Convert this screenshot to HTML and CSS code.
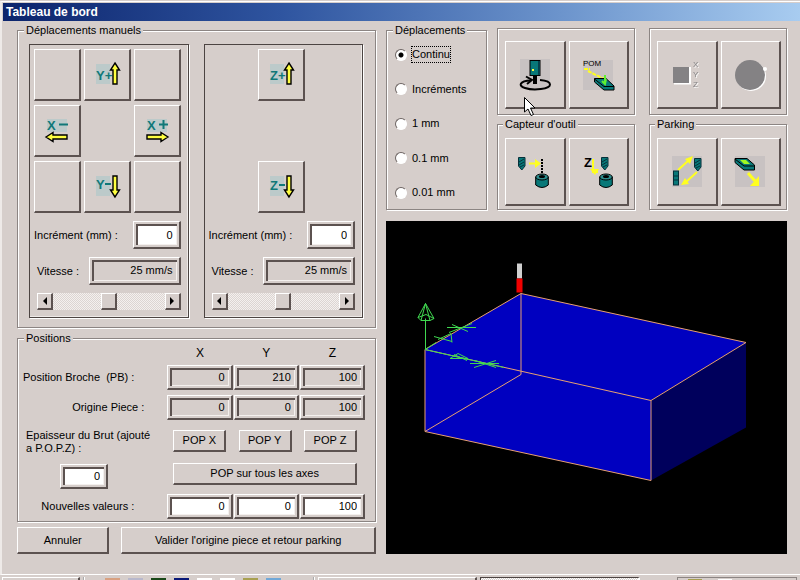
FILE: index.html
```html
<!DOCTYPE html>
<html lang="fr">
	<head>
		<meta charset="UTF-8" />
		<meta name="viewport" content="width=device-width, initial-scale=1.0" />
		<title>Tableau de bord</title>
		<link rel="stylesheet" href="styles.css">
	</head>
	<body>
		<!-- shared icon shapes -->
		<svg class="defs" width="0" height="0">
			<defs>
				<path id="arrow-up" d="M5 1 L9.5 8 H7 V22 H3 V8 H0.5 Z" fill="#ffff40" stroke="#000" stroke-width="1.4" />
				<g id="drill">
					<path d="M0.5 0.5 H7 V9 L3.8 13 L0.5 9 Z" fill="#087878" stroke="#06303a" />
					<path d="M1 5 L6 2 M1 8 L6 5 M2 10 L6 8" stroke="#06303a" />
				</g>
				<g id="cylinder">
					<path d="M0.7 4 V12 Q7 17 13.3 12 V4" fill="#087878" stroke="#000" />
					<ellipse cx="7" cy="4" rx="6.3" ry="3" fill="#2c8c8c" stroke="#000" />
					<ellipse cx="7" cy="3.5" rx="3" ry="1.5" fill="#000" />
				</g>
			</defs>
		</svg>

		<div class="window">
			<div class="titlebar">Tableau de bord</div>
			<div class="content">
				<div class="left">
					<fieldset class="group manual">
						<legend>Déplacements manuels</legend>
						<div class="panel">
							<div class="pad">
								<button aria-label="Haut gauche"></button>
								<button aria-label="Y plus">
									<svg class="icon" viewBox="0 0 30 30">
										<rect class="tint" x="4" y="4" width="14" height="20" />
										<text class="axis" x="4" y="20">Y+</text>
										<use href="#arrow-up" x="18" y="2" />
									</svg>
								</button>
								<button aria-label="Haut droite"></button>
								<button aria-label="X moins">
									<svg class="icon" viewBox="0 0 30 30">
										<rect class="tint" x="5" y="3" width="20" height="13" />
										<text class="axis" x="5" y="14">X</text>
										<path d="M17 8.5 H26" stroke="#107878" stroke-width="2" />
										<use href="#arrow-up" transform="translate(3 26) rotate(-90)" />
									</svg>
								</button>
								<button class="right-col" aria-label="X plus">
									<svg class="icon" viewBox="0 0 30 30">
										<rect class="tint" x="5" y="3" width="20" height="13" />
										<text class="axis" x="5" y="14">X</text>
										<path d="M17 8.5 H26 M21.5 4 V13" stroke="#107878" stroke-width="2" />
										<use href="#arrow-up" transform="translate(27 16) rotate(90)" />
									</svg>
								</button>
								<button aria-label="Bas gauche"></button>
								<button aria-label="Y moins">
									<svg class="icon" viewBox="0 0 30 30">
										<rect class="tint" x="4" y="4" width="14" height="20" />
										<text class="axis" x="4" y="17">Y</text>
										<path d="M13 12 H19" stroke="#107878" stroke-width="2" />
										<use href="#arrow-up" transform="translate(28 26) rotate(180)" />
									</svg>
								</button>
								<button aria-label="Bas droite"></button>
							</div>
							<div class="row">
								<label for="inc-xy">Incrément (mm) :</label>
								<input class="field small" type="text" id="inc-xy" value="0" />
							</div>
							<div class="row">
								<label class="indent" for="speed-xy">Vitesse :</label>
								<output class="field speed">25 mm/s</output>
							</div>
							<div class="scroll">
								<button aria-label="Moins vite"><svg viewBox="0 0 8 8"><path d="M6 0 V8 L2 4 Z" /></svg></button>
								<input type="range" id="speed-xy" min="0" max="50" value="25" />
								<button aria-label="Plus vite"><svg viewBox="0 0 8 8"><path d="M2 0 V8 L6 4 Z" /></svg></button>
							</div>
						</div>
						<div class="panel">
							<div class="pad">
								<button class="mid-col" aria-label="Z plus">
									<svg class="icon" viewBox="0 0 30 30">
										<rect class="tint" x="4" y="4" width="14" height="20" />
										<text class="axis" x="4" y="20">Z+</text>
										<use href="#arrow-up" x="18" y="2" />
									</svg>
								</button>
								<button class="mid-col last-row" aria-label="Z moins">
									<svg class="icon" viewBox="0 0 30 30">
										<rect class="tint" x="4" y="4" width="14" height="20" />
										<text class="axis" x="4" y="18">Z</text>
										<path d="M13 13 H19" stroke="#107878" stroke-width="2" />
										<use href="#arrow-up" transform="translate(28 26) rotate(180)" />
									</svg>
								</button>
							</div>
							<div class="row">
								<label for="inc-z">Incrément (mm) :</label>
								<input class="field small" type="text" id="inc-z" value="0" />
							</div>
							<div class="row">
								<label class="indent" for="speed-z">Vitesse :</label>
								<output class="field speed">25 mm/s</output>
							</div>
							<div class="scroll">
								<button aria-label="Moins vite"><svg viewBox="0 0 8 8"><path d="M6 0 V8 L2 4 Z" /></svg></button>
								<input type="range" id="speed-z" min="0" max="50" value="25" />
								<button aria-label="Plus vite"><svg viewBox="0 0 8 8"><path d="M2 0 V8 L6 4 Z" /></svg></button>
							</div>
						</div>
					</fieldset>

					<fieldset class="group positions">
						<legend>Positions</legend>
						<div class="grid">
							<span></span>
							<span class="head">X</span>
							<span class="head">Y</span>
							<span class="head">Z</span>

							<span class="name">Position Broche &nbsp;(PB) :</span>
							<output class="field">0</output>
							<output class="field">210</output>
							<output class="field">100</output>

							<span class="name far">Origine Piece :</span>
							<output class="field">0</output>
							<output class="field">0</output>
							<output class="field">100</output>

							<div class="stock">
								<label for="stock">Epaisseur du Brut (ajouté<br />a P.O.P.Z) :</label>
								<input class="field small" type="text" id="stock" value="0" />
							</div>
							<div class="pop">
								<div class="pop-row">
									<button>POP X</button>
									<button>POP Y</button>
									<button>POP Z</button>
								</div>
								<button>POP sur tous les axes</button>
							</div>

							<span class="name">Nouvelles valeurs :</span>
							<input class="field" type="text" aria-label="Nouvelle valeur X" value="0" />
							<input class="field" type="text" aria-label="Nouvelle valeur Y" value="0" />
							<input class="field" type="text" aria-label="Nouvelle valeur Z" value="100" />
						</div>
					</fieldset>

					<div class="actions">
						<button class="cancel">Annuler</button>
						<button class="ok">Valider l'origine piece et retour parking</button>
					</div>
				</div>

				<div class="right">
					<div class="top">
						<fieldset class="group moves">
							<legend>Déplacements</legend>
							<label><input type="radio" name="move" checked /><span>Continu</span></label>
							<label><input type="radio" name="move" /><span>Incréments</span></label>
							<label><input type="radio" name="move" /><span>1 mm</span></label>
							<label><input type="radio" name="move" /><span>0.1 mm</span></label>
							<label><input type="radio" name="move" /><span>0.01 mm</span></label>
						</fieldset>
						<div class="tools">
							<div class="group tool-box">
								<button aria-label="Broche">
									<svg class="tool" viewBox="0 0 36 36">
										<rect class="shade" x="3" y="2" width="30" height="30" />
										<rect x="13" y="3.5" width="10" height="15" fill="#087878" stroke="#000" />
										<path d="M22 4 V18" stroke="#06404a" stroke-width="2" />
										<rect x="15" y="12" width="2" height="2" fill="#ffff40" />
										<rect x="16" y="19" width="4" height="8" />
										<path d="M14 23.5 C2 24 1 29 8 31 C17 34 33 32 33 27.5 C33 25 29 23.5 23 23" fill="none" stroke="#000" stroke-width="2" />
										<path d="M9 19.5 L15 23 L10 27" fill="none" stroke="#000" stroke-width="2" />
									</svg>
									<svg class="cursor" viewBox="0 0 12 20">
										<path d="M0.5 0.5 V15 L4 12 L7 18.5 L9.5 17.5 L6.5 11 H11 Z" fill="#fff" stroke="#000" />
									</svg>
								</button>
								<button aria-label="Prise d'origine machine">
									<svg class="tool" viewBox="0 0 36 36">
										<rect class="shade" x="3" y="3" width="30" height="30" />
										<text class="pom" x="3" y="9">POM</text>
										<path d="M4 12 H10 M8 14 L24 22" stroke="#ffff20" stroke-width="2" stroke-dasharray="4 1" />
										<path d="M14.5 21.5 H26 L34 29 V33 H24 L14.5 25 Z" fill="#087878" stroke="#000" />
										<path d="M14.5 22 L24 29.5 H34" fill="none" stroke="#000" />
										<path d="M25 18 V27 M22 24 L25 27 L26 22" stroke="#60f030" stroke-width="2" fill="none" />
									</svg>
								</button>
							</div>
							<div class="group tool-box">
								<button aria-label="Axes XYZ" disabled>
									<svg class="tool" viewBox="0 0 36 36">
										<path d="M5 26.5 H21 V10" fill="none" stroke="#fff" stroke-width="2" />
										<rect x="4" y="10" width="16" height="16" fill="#848284" />
										<g class="xyz">
											<text x="24" y="10">X</text>
											<text x="24" y="20">Y</text>
											<text x="24" y="30">Z</text>
										</g>
									</svg>
								</button>
								<button aria-label="Arrêt" disabled>
									<svg class="tool" viewBox="0 0 36 36">
										<circle cx="19" cy="19" r="15" fill="#fff" />
										<circle cx="18" cy="18" r="15" fill="#848284" />
										<circle cx="33" cy="12" r="2" fill="#fff" />
									</svg>
								</button>
							</div>
							<fieldset class="group tool-box">
								<legend>Capteur d'outil</legend>
								<button aria-label="Aller au capteur">
									<svg class="tool" viewBox="0 0 36 36">
										<use href="#drill" x="1" y="3" />
										<path d="M12 9.5 H19" stroke="#ffff20" stroke-width="2" />
										<path d="M18 5 L24 9.5 L18 14 Z" fill="#ffff20" />
										<path d="M25 5 V20" stroke="#000" stroke-width="2" stroke-dasharray="2 1" />
										<use href="#cylinder" x="18" y="19" />
									</svg>
								</button>
								<button aria-label="Mesurer Z">
									<svg class="tool" viewBox="0 0 36 36">
										<text class="z" x="4" y="13">Z</text>
										<path d="M13 5 V18 H18" fill="none" stroke="#ffff20" stroke-width="2" />
										<path d="M10 15 H19 L15 21 Z" fill="#ffff20" />
										<use href="#drill" x="21" y="3" />
										<use href="#cylinder" x="19" y="19" />
									</svg>
								</button>
							</fieldset>
							<fieldset class="group tool-box">
								<legend>Parking</legend>
								<button aria-label="Aller au parking">
									<svg class="tool" viewBox="0 0 36 36">
										<rect class="shade" x="3" y="2" width="30" height="31" />
										<path d="M9 16 L20 6 M28 18 L17 28" stroke="#ffff20" stroke-width="2" />
										<path d="M16 5 L24 2 L21 10 Z M20 30 L12 31 L16 24 Z" fill="#ffff20" />
										<use href="#drill" x="25" y="4" />
										<rect x="4.5" y="17" width="5" height="14" fill="#087878" stroke="#06303a" />
										<path d="M4 22 H10 M4 26 H10" stroke="#06303a" />
									</svg>
								</button>
								<button aria-label="Parking pièce">
									<svg class="tool" viewBox="0 0 36 36">
										<rect class="shade" x="3" y="2" width="30" height="31" />
										<path d="M3 4.5 H15 L22.5 11 V16 H12 L3 8.5 Z" fill="#087878" stroke="#000" />
										<path d="M3 5 L12 12 H22" fill="none" stroke="#000" />
										<path d="M8 6 H14 L18 10 H12 Z" fill="#a0f820" />
										<path d="M16 19 L23 27" stroke="#ffff20" stroke-width="3" />
										<path d="M27 22 V32 H18 Z" fill="#ffff20" />
									</svg>
								</button>
							</fieldset>
						</div>
					</div>

					<svg class="view" viewBox="0 0 401 332" role="img" aria-label="Vue 3D de la pièce">
						<!-- stock block -->
						<path d="M135 72 L360 121 L265 179 V259 L39 210 V128 Z" fill="#0000c0" />
						<path d="M360 121 V206 L265 259 V179 Z" fill="#00005c" />
						<g fill="none" stroke="#e8a070">
							<path d="M135 72 L360 121 L265 179 L39 128 Z" />
							<path d="M39 128 V210 L265 259 V179" />
							<path d="M135 72 V153 L39 210" />
						</g>
						<!-- tool -->
						<path d="M133.5 42 V57" stroke="#d0d0d0" stroke-width="5" />
						<path d="M133.5 57 V71" stroke="#f00000" stroke-width="6" />
						<!-- axes -->
						<g fill="none" stroke="#40d850">
							<path d="M39.5 128 V97 M39.5 82 L32 96 L35 99 L39.5 82 L44 99 L48 97 Z M32 96 L40 93 L48 97 M35 99 H44" />
							<path d="M39 128 L50 121 M48 115 L66 120 M52 118 L65 112 L66 121 M61 106 L90 106 M66 103 L82 110 M63 111 L86 102" />
							<path d="M39 128 L118 146 M64 137 H82 L72 132 Z M68 133 L81 139 M84 142 H113 M89 139 L110 146 M88 146 L110 139" />
						</g>
					</svg>
				</div>
			</div>
		</div>

		<div class="taskbar">
			<span class="task start"></span>
			<div class="quick">
				<i class="orange"></i><i class="lilac"></i><i class="green"></i><i class="navy"></i><i class="white"></i><i class="white"></i><i class="olive"></i><i class="blue"></i>
			</div>
			<span class="task"></span>
			<span class="task active"></span>
			<span class="tray"><i class="olive"></i><i class="white"></i></span>
		</div>
	</body>
</html>
```
FILE: styles.css
```css
* {
	box-sizing: border-box;
}
body {
	margin: 0;
	height: 100vh;
	display: flex;
	flex-direction: column;
	overflow: hidden;
	background-color: #d6cecb;
	color: black;
	font-family: "Liberation Sans", Arial, sans-serif;
	font-size: 11px;
	line-height: 13px;
}
.defs {
	position: absolute;
}
.window {
	flex: 1 0 auto;
	display: flex;
	flex-direction: column;
	margin-top: 1px;
	padding: 1px 0 0 1px;
	border-top: 1px solid white;
	border-left: 2px solid #eeeae8;
	border-bottom: 1px solid white;
}
.titlebar {
	height: 18px;
	padding-left: 3px;
	background: linear-gradient(to right, #0c246c, #2f55a0 35%, #6c94cc 70%, #a8ccf0);
	color: white;
	font-size: 12px;
	font-weight: bold;
	line-height: 18px;
}
.content {
	flex: 1;
	display: grid;
	grid-template-columns: 359fr 401fr;
	gap: 10px;
	padding: 3px 13px 20px 14px;
}
.left,
.right {
	display: flex;
	flex-direction: column;
	min-width: 0;
}

/* groups */
.group {
	min-width: 0;
	margin: 0;
	border: 1px solid #8c8583;
	box-shadow: 1px 1px 0 white, inset 1px 1px 0 white;
}
legend {
	margin-left: -2px;
	padding: 0 2px;
	background-color: #d6cecb;
}
.manual legend {
	margin-left: -5px;
}
.positions legend {
	margin-left: 1px;
}

/* buttons and fields */
button {
	margin: 0;
	padding: 0;
	border: solid;
	border-width: 1px 2px 2px 1px;
	border-color: white #5c5250 #5c5250 white;
	background-color: #d6cecb;
	color: black;
	font: inherit;
}
.field {
	display: block;
	width: 100%;
	height: 25px;
	margin: 0;
	padding: 2px 6px 2px 4px;
	border: solid;
	border-width: 1px 2px 2px 1px;
	border-color: white #5c5250 #5c5250 white;
	background-color: #d6cecb;
	box-shadow: inset 0 0 0 2px #d6cecb, inset 4px 4px 0 #5c5250, inset -3px -3px 0 #f4f0ee;
	color: black;
	font: inherit;
	line-height: 18px;
	text-align: right;
}
input.field {
	background-color: white;
}
.small {
	width: 48px;
}

/* manual moves */
.manual {
	display: grid;
	grid-template-columns: repeat(2, minmax(0, 1fr));
	gap: 15px;
	padding: 7px 12px 9px 11px;
}
.panel {
	display: flex;
	flex-direction: column;
	gap: 8px;
	padding: 4px 7px 7px 4px;
	border: 1px solid #4c4442;
	box-shadow: 1px 1px 0 white, inset -1px -1px 0 #eeeae8;
}
.pad {
	display: grid;
	grid-template-columns: repeat(3, 47px);
	grid-template-rows: repeat(3, 52px);
	justify-content: center;
	gap: 4px 3px;
}
.right-col {
	grid-column: 3;
}
.mid-col {
	grid-column: 2;
}
.last-row {
	grid-row: 3;
}
.icon {
	display: block;
	width: 30px;
	height: 30px;
	margin: auto;
}
.tint {
	fill: #bccaca;
}
.axis {
	fill: #107878;
	font-size: 13px;
	font-weight: bold;
}
.row {
	display: flex;
	align-items: center;
	justify-content: space-between;
	height: 28px;
	white-space: nowrap;
}
.row .field {
	height: 28px;
	line-height: 20px;
}
.row .speed {
	width: 92px;
}
.indent {
	padding-left: 3px;
}
.scroll {
	display: flex;
	height: 17px;
	margin-left: 3px;
	background: repeating-conic-gradient(#f4f0ee 0% 25%, #dcd5d2 0% 50%) 0 0 / 2px 2px;
}
.scroll button {
	flex: none;
	width: 16px;
}
.scroll svg {
	display: block;
	width: 8px;
	height: 8px;
	margin: auto;
}
.scroll input {
	flex: 1;
	min-width: 0;
	height: 17px;
	margin: 0;
	appearance: none;
	background: none;
}
.scroll input::-webkit-slider-thumb {
	appearance: none;
	width: 16px;
	height: 17px;
	border: solid;
	border-width: 1px 2px 2px 1px;
	border-color: white #5c5250 #5c5250 white;
	background-color: #d6cecb;
}

/* positions */
.positions {
	margin-top: 4px;
	padding: 2px 10px 2px 5px;
}
.grid {
	display: grid;
	grid-template-columns: 138fr 67fr 67fr 67fr;
	gap: 5px 1px;
	align-items: center;
}
.head {
	text-align: center;
	font-size: 12px;
}
.name {
	padding-right: 32px;
	text-align: right;
	white-space: nowrap;
}
.far {
	padding-right: 22px;
}
.stock {
	display: flex;
	flex-direction: column;
	gap: 9px;
	height: 64px;
	padding: 4px 0 0 3px;
	white-space: nowrap;
}
.stock .field {
	margin-left: 34px;
}
.pop {
	grid-column: 2 / 5;
	display: flex;
	flex-direction: column;
	gap: 11px;
	padding: 0 8px 0 6px;
}
.pop-row {
	display: flex;
	justify-content: space-between;
}
.pop button {
	height: 22px;
}
.pop-row button {
	width: 53px;
}
.actions {
	display: flex;
	gap: 12px;
	margin-top: 5px;
}
.actions button {
	height: 27px;
}
.cancel {
	flex: 91;
}
.ok {
	flex: 256;
}

/* move step */
.top {
	display: grid;
	grid-template-columns: 101fr 290fr;
	gap: 10px;
	height: 186px;
}
.moves {
	display: flex;
	flex-direction: column;
	justify-content: space-between;
	padding: 9px 0 8px 8px;
}
.moves label {
	display: flex;
	align-items: center;
	gap: 4px;
}
.moves input {
	appearance: none;
	width: 12px;
	height: 12px;
	margin: 0;
	border: 1px solid;
	border-color: #6c6462 white white #6c6462;
	border-radius: 50%;
	background-color: white;
}
.moves input:checked {
	background-image: radial-gradient(circle, black 2px, white 3px);
}
.moves span {
	padding: 1px 0;
	border: 1px solid transparent;
}
.moves input:checked + span {
	border: 1px dotted black;
}

/* tool buttons */
.tools {
	display: grid;
	grid-template-columns: 1fr 1fr;
	grid-template-rows: 87px 92px;
	gap: 3px 14px;
	padding-top: 4px;
}
.tool-box {
	display: grid;
	grid-template-columns: 1fr 1fr;
	gap: 3px;
	padding: 12px 5px 6px 7px;
}
fieldset.tool-box {
	padding: 7px 5px 4px 7px;
}
.tool-box button {
	position: relative;
	height: 68px;
}
.tool {
	display: block;
	width: 36px;
	height: 36px;
	margin: auto;
}
.shade {
	fill: #c8c2c2;
}
.pom {
	font-size: 8px;
}
.z {
	font-size: 13px;
	font-weight: bold;
}
.xyz {
	fill: #848284;
	font-size: 8px;
	filter: drop-shadow(1px 1px 0 white);
}
.cursor {
	position: absolute;
	left: 18px;
	top: 55px;
	width: 12px;
	height: 20px;
	z-index: 1;
}
.view {
	flex: 1 1 0;
	width: 100%;
	min-height: 0;
	margin-top: 11px;
	background-color: black;
}

/* taskbar, only its top edge shows */
.taskbar {
	flex: none;
	display: flex;
	gap: 3px;
	height: 6px;
	padding: 2px 3px 0 2px;
}
.task {
	flex: 1 1 160px;
	border: solid;
	border-width: 1px 2px 0 1px;
	border-color: white #5c5250 white white;
}
.start {
	flex-basis: 78px;
}
.active {
	border-color: #4c4442 white white #4c4442;
	background: repeating-conic-gradient(white 0% 25%, #d6cecb 0% 50%) 0 0 / 2px 2px;
}
.quick {
	flex: 1 1 232px;
	display: flex;
	gap: 8px;
	padding: 1px 32px 0 20px;
	border-left: 2px groove white;
	border-right: 2px groove white;
}
.quick i,
.tray i {
	flex: 1;
}
.tray {
	flex: 1 1 120px;
	display: flex;
	gap: 16px;
	margin-left: 34px;
	padding: 1px 64px 0 10px;
	border: 1px solid #8c8583;
	border-bottom: none;
}
.orange {
	background-color: #d8a080;
}
.lilac {
	background-color: #b8b8cc;
}
.green {
	background-color: #184818;
}
.navy {
	background-color: #081878;
}
.white {
	background-color: white;
}
.olive {
	background-color: #a8a050;
}
.blue {
	background-color: #70a8d8;
}
```
